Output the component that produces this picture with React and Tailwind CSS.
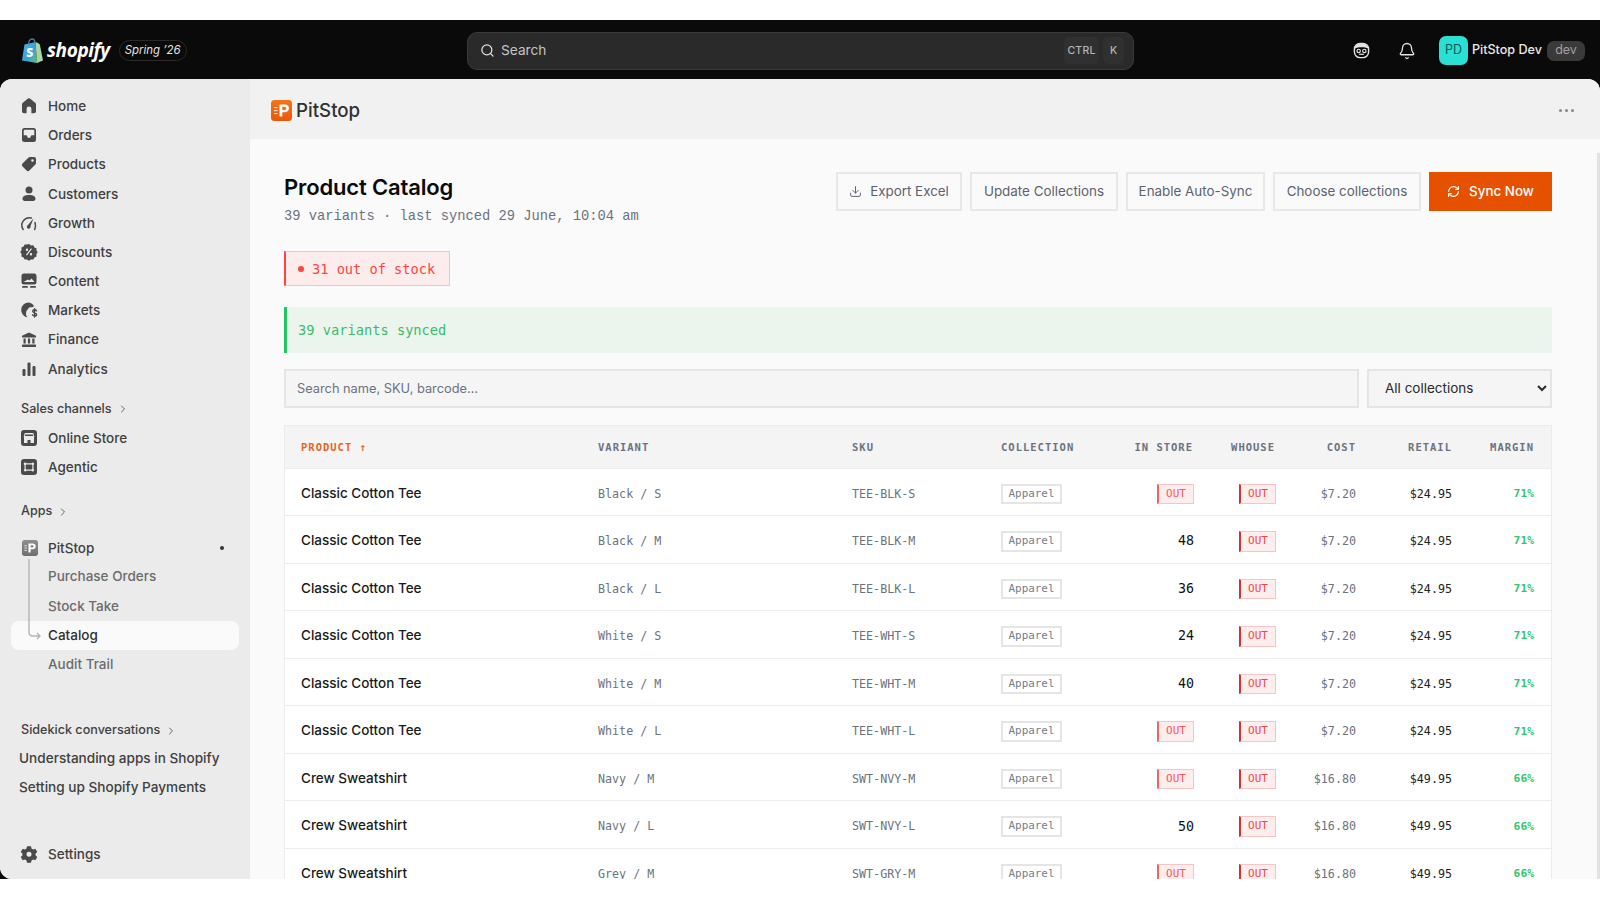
import React from "react";
import { Bell, Search, ChevronRight, Download, RefreshCw } from "lucide-react";

const sans = "font-['Inter','Liberation_Sans',sans-serif]";
const mono = "font-['DejaVu_Sans_Mono',monospace]";
const mono2 = "font-['Liberation_Mono',monospace]";

const I = ({ children }) => (
  <svg width="20" height="20" viewBox="0 0 20 20" fill="#4a4a4a" className="shrink-0">{children}</svg>
);

const icons = {
  Home: <I><path d="M9 2.600a1.600 1.600 0 0 1 2 0l5.200 4.200c.5.400.8 1 .8 1.600v6.800a2 2 0 0 1-2 2h-2.600v-4.400a2.400 2.400 0 0 0-4.800 0v4.400H5a2 2 0 0 1-2-2V8.400c0-.6.3-1.200.8-1.600z"/></I>,
  Orders: <I><path fillRule="evenodd" d="M5.500 3h9A2.500 2.500 0 0 1 17 5.500v9a2.500 2.500 0 0 1-2.500 2.500h-9A2.500 2.500 0 0 1 3 14.500v-9A2.500 2.500 0 0 1 5.500 3M4.700 5.500v4.800h2.500c.5 0 .8.300.9.700a1.900 1.900 0 0 0 3.800 0c.1-.4.400-.7.900-.7h2.500V5.500c0-.4-.3-.8-.8-.8h-9c-.5 0-.8.400-.8.800"/></I>,
  Products: <I><path fillRule="evenodd" d="M11 3h4a2 2 0 0 1 2 2v4c0 .6-.2 1.100-.6 1.500l-6 6a2 2 0 0 1-2.800 0l-4.100-4.100a2 2 0 0 1 0-2.800l6-6C9.900 3.200 10.400 3 11 3m2.500 4.800a1.300 1.300 0 1 0 0-2.600 1.300 1.300 0 0 0 0 2.600"/></I>,
  Customers: <I><circle cx="10" cy="6" r="3.500"/><path d="M3.500 14.800c0-2.300 2.300-3.800 6.500-3.800s6.500 1.500 6.500 3.800c0 1.300-.9 2.200-2.200 2.200H5.700c-1.300 0-2.200-.9-2.200-2.200"/></I>,
  Growth: <I><path fill="none" stroke="#4a4a4a" strokeWidth="1.500" strokeLinecap="round" d="M4.200 16.500A7.500 7.500 0 0 1 12.300 5M16 9.500c.8 2.300.6 4.800-.3 7"/><path d="M14.600 5.200 11.500 13a1.900 1.900 0 1 1-2.500-1z"/></I>,
  Discounts: <I><path fillRule="evenodd" d="M10 2l2 1.400 2.400-.2 1 2.200 2.200 1-.2 2.400L18.800 10l-1.400 2 .2 2.400-2.200 1-1 2.200-2.400-.2-2 1.400-2-1.400-2.400.2-1-2.200-2.200-1 .2-2.400L1.200 10l1.400-2-.2-2.400 2.200-1 1-2.200 2.400.2zM8 9a1.200 1.200 0 1 0 0-2.400A1.200 1.200 0 0 0 8 9m4 4.400A1.200 1.200 0 1 0 12 11a1.200 1.200 0 0 0 0 2.400m.9-6.300-.9-.8-5 6.500.9.800z"/></I>,
  Content: <I><path fillRule="evenodd" d="M5 2.500h10A2.500 2.500 0 0 1 17.500 5v6a2.500 2.500 0 0 1-2.500 2.500H5A2.500 2.500 0 0 1 2.500 11V5A2.500 2.500 0 0 1 5 2.500M4.500 11h11l-3-3.500-2 2-1.500-1z"/><rect x="3" y="15" width="6" height="1.800" rx=".9"/><rect x="11" y="15" width="6" height="1.800" rx=".9"/></I>,
  Markets: <I><path d="M9.500 2.500a7.500 7.500 0 0 0-1 14.900c-.9-1-1.500-2.300-1.500-3.900 0-2 .9-3.700 2.300-4.800.3-1.300 1.600-1.300 2.900-1.400 1.300-.1 2.300-.5 2.800-1.300-1.300-2.200-3.700-3.500-5.500-3.500"/><path fill="none" stroke="#4a4a4a" strokeWidth="1.400" strokeLinecap="round" d="M17.500 10.800c-.4-.7-1.100-1-1.900-1-1.100 0-1.900.6-1.900 1.500 0 2 3.900 1 3.900 3.100 0 .9-.9 1.500-2 1.500-.9 0-1.600-.4-2-1.100M15.600 8.700v8.400"/></I>,
  Finance: <I><path d="M10 2.500l7 3.300v1.700H3V5.800z"/><rect x="4.500" y="8.500" width="2.200" height="5" /><rect x="8.900" y="8.500" width="2.200" height="5" /><rect x="13.300" y="8.500" width="2.200" height="5" /><rect x="3" y="14.500" width="14" height="2.500" rx=".6"/></I>,
  Analytics: <I><rect x="3.500" y="10" width="3" height="7" rx="1"/><rect x="8.500" y="3.500" width="3" height="13.500" rx="1"/><rect x="13.500" y="7" width="3" height="10" rx="1"/></I>,
  "Online Store": <I><path fillRule="evenodd" d="M5 2h10a3 3 0 0 1 3 3v10a3 3 0 0 1-3 3H5a3 3 0 0 1-3-3V5a3 3 0 0 1 3-3m.8 3-1 3.200A1.800 1.800 0 0 0 5 9.600V15h3.500v-3h3v3H15V9.600a1.800 1.800 0 0 0 .2-1.400L14.200 5zm.4 1.500h7.600l.4 1.500H5.800z"/></I>,
  Agentic: <I><path fillRule="evenodd" d="M5 2h10a3 3 0 0 1 3 3v10a3 3 0 0 1-3 3H5a3 3 0 0 1-3-3V5a3 3 0 0 1 3-3m1 3.500A1.300 1.300 0 0 0 5.500 8v4a1.300 1.300 0 1 0 1.800 1.800h5.400A1.300 1.300 0 1 0 14.500 12V8a1.300 1.300 0 1 0-1.800-1.800H7.300A1.300 1.300 0 0 0 6 5.500m1.300 2h5.400l.6.600v3.800l-.6.600H7.300l-.6-.6V8.100z"/></I>,
  Settings: <I><path fillRule="evenodd" d="M8 2.500h4l.5 2.200 1.600.9 2.200-.7 2 3.400-1.700 1.500v1.800l1.700 1.500-2 3.400-2.200-.7-1.600.9-.5 2.200H8l-.5-2.200-1.600-.9-2.200.7-2-3.400 1.700-1.500V9.800L1.700 8.300l2-3.400 2.200.7 1.600-.9zM10 13a2.500 2.500 0 1 0 0-5 2.500 2.500 0 0 0 0 5" transform="translate(0 -.2)"/></I>,
};

const NavItem = ({ label }) => (
  <div className="flex h-[29.2px] items-center gap-[9px] pl-[19px] text-[13.500px] font-medium text-[#404040]">
    {icons[label]}
    <span>{label}</span>
  </div>
);

const SectionLabel = ({ children, className = "" }) => (
  <div className={`flex h-[29.2px] items-center gap-[5px] pl-[21px] text-[12.600px] font-medium text-[#404040] ${className}`}>
    <span>{children}</span>
    <ChevronRight size={12} strokeWidth={1.800} color="#555" />
  </div>
);

const PitLogo = ({ size, gray }) => (
  <svg width={size} height={size} viewBox="0 0 21 21" className="shrink-0">
    <defs>
      <linearGradient id={gray ? "pg" : "po"} x1="0" y1="0" x2="0" y2="1">
        <stop offset="0" stopColor={gray ? "#8f8f8f" : "#f97316"} />
        <stop offset="1" stopColor={gray ? "#6e6e6e" : "#ea580c"} />
      </linearGradient>
    </defs>
    <rect width="21" height="21" rx="3.500" fill={`url(#${gray ? "pg" : "po"})`} />
    <path fill="#fff" fillRule="evenodd" d="M8.500 4.500h5.300c2.700 0 4.200 1.400 4.200 3.800s-1.500 3.900-4.200 3.900h-2.500v4.300H8.500zm2.800 2.300v3.100h2.100c1.200 0 1.800-.6 1.800-1.600s-.6-1.500-1.800-1.500z" />
    <rect x="3" y="7" width="3.500" height="1.100" fill="#fff" opacity=".85" />
    <rect x="3" y="10" width="3.500" height="1.100" fill="#fff" opacity=".85" />
    <rect x="3" y="13" width="3.500" height="1.100" fill="#fff" opacity=".85" />
  </svg>
);

const ShopifyBag = () => (
  <svg width="21" height="25" viewBox="0 0 21 25" className="shrink-0">
    <defs>
      <linearGradient id="bagg" x1="0" y1="0" x2="1" y2="1">
        <stop offset="0" stopColor="#4fb4e8" />
        <stop offset=".55" stopColor="#3aa0d8" />
        <stop offset="1" stopColor="#5fc27e" />
      </linearGradient>
    </defs>
    <path fill="url(#bagg)" d="M2.500 6.500 13.500 4l1.500 21L0 22.500z" />
    <path fill="#a9d6a0" d="M13.500 4l2.500 1 1.800 1.500L21 22.500 15 25z" />
    <path fill="none" stroke="#4a7d9c" strokeWidth="1.300" d="M6.500 6.500c0-3 1.500-5.500 3.500-5.500s3 2 3 4.500" />
    <text x="7.600" y="18.500" fontSize="12" fontWeight="800" fill="#fff" textAnchor="middle" fontFamily="Open Sans, sans-serif">S</text>
  </svg>
);

const Btn = ({ children, w }) => (
  <button className={`flex h-[39px] items-center justify-center gap-2 border-2 border-[#e8e8e8] bg-[#fafafa] text-[13.400px] text-[#5c6270] ${w}`}>
    {children}
  </button>
);

const grid = "grid grid-cols-[296px_254px_149px_121px_105px_82px_81px_96px_83px] items-center";

const OutBadge = ({ light }) => (
  <span className={`inline-flex h-[20.500px] w-[37px] items-center justify-center border border-l-2 border-[#fbc4c4] bg-[#fdeeee] ${mono} text-[11px] ${light ? "border-l-[#f86060] text-[#f55]" : "border-l-[#dc3030] text-[#f04848]"}`}>
    OUT
  </span>
);

const tee = (c, s, store) => ({ p: "Classic Cotton Tee", v: `${c} / ${s}`, sku: `TEE-${c === "Black" ? "BLK" : "WHT"}-${s}`, store, cost: "$7.20", retail: "$24.95", m: "71%" });
const crew = (c, s, store) => ({ p: "Crew Sweatshirt", v: `${c} / ${s}`, sku: `SWT-${c === "Navy" ? "NVY" : "GRY"}-${s}`, store, cost: "$16.80", retail: "$49.95", m: "66%" });

const rows = [
  tee("Black", "S", null), tee("Black", "M", 48), tee("Black", "L", 36),
  tee("White", "S", 24), tee("White", "M", 40), tee("White", "L", null),
  crew("Navy", "M", null), crew("Navy", "L", 50), crew("Grey", "M", null),
];

const Th = ({ children, right, pr = "pr-[17px]" }) => (
  <div className={`pl-[17px] ${pr} ${mono} text-[10.500px] font-bold tracking-[1px] text-[#6b7280] ${right ? "text-right" : ""}`}>{children}</div>
);

export default function App() {
  return (
    <div className={`flex h-screen flex-col overflow-hidden bg-white ${sans}`}>
      <div className="h-5 shrink-0" />
      <div className="flex h-[859px] shrink-0 flex-col bg-[#0a0a0a]">
        <header className="relative flex h-[59px] shrink-0 items-center pt-[2px]">
          <div className="flex w-[467px] shrink-0 items-center pl-[22px]">
            <ShopifyBag />
            <span className="ml-[4px] font-['Open_Sans',sans-serif] text-[19px] font-bold italic leading-none tracking-[-0.4px] text-white">shopify</span>
            <span className="ml-[9px] flex h-[21px] w-[68px] items-center justify-center rounded-full border border-[#2a2a2a] text-[11.400px] italic text-[#e3e3e3]">Spring ’26</span>
          </div>
          <div className="flex h-[38px] w-[667px] items-center rounded-[10px] border border-[#3a3a3a] bg-[#2a2a2a] pl-[12px] pr-[9px]">
            <Search size={15} strokeWidth={2} color="#e3e3e3" />
            <span className="ml-[6px] text-[13.700px] text-[#c4c4c4]">Search</span>
            <span className="ml-auto flex h-[27px] w-[35px] items-center justify-center rounded-[5px] bg-[#303030] text-[10.500px] font-medium tracking-[0.2px] text-[#b5b5b5]">CTRL</span>
            <span className="ml-1 flex h-[27px] w-[21px] items-center justify-center rounded-[5px] bg-[#303030] text-[10.500px] font-medium text-[#b5b5b5]">K</span>
          </div>
          <div className="ml-auto flex items-center pr-[15px]">
            <svg width="17" height="17" viewBox="0 0 18 18" className="mr-[28px]">
              <rect x="1.500" y="1.500" width="15" height="15" rx="6" fill="none" stroke="#e3e3e3" strokeWidth="1.500" />
              <path d="M2 7c2-1 4-1.500 7-1.500S14 6 16 7v-2l-3-3H5L2 5z" fill="#e3e3e3" />
              <circle cx="6" cy="9.500" r="1.800" fill="none" stroke="#e3e3e3" strokeWidth="1.200" />
              <circle cx="12" cy="9.500" r="1.800" fill="none" stroke="#e3e3e3" strokeWidth="1.200" />
              <path d="M6.500 13h5" stroke="#e3e3e3" strokeWidth="1.300" />
            </svg>
            <Bell size={18} strokeWidth={1.700} color="#e3e3e3" className="mr-[23px]" />
            <span className="flex h-[29px] w-[29px] items-center justify-center rounded-[7px] bg-[#2ae0d4] text-[12.500px] text-[#0c5a58]">PD</span>
            <span className="ml-[4px] text-[12.600px] font-medium text-[#e8e8e8]">PitStop Dev</span>
            <span className="ml-[5px] flex h-5 w-[38px] items-center justify-center rounded-[7px] bg-[#3a3a3a] text-[12.500px] text-[#a0a0a0]">dev</span>
          </div>
        </header>

        <div className="relative flex min-h-0 flex-1 overflow-hidden rounded-[12px] rounded-br-none bg-[#fafafa]">
          <aside className="flex w-[250px] shrink-0 flex-col bg-[#ebebeb] pb-[10px] pt-[12.500px]">
            {["Home", "Orders", "Products", "Customers", "Growth", "Discounts", "Content", "Markets", "Finance", "Analytics"].map((l) => (
              <NavItem key={l} label={l} />
            ))}
            <SectionLabel className="mt-[11px]">Sales channels</SectionLabel>
            <NavItem label="Online Store" />
            <NavItem label="Agentic" />
            <SectionLabel className="mt-[15px]">Apps</SectionLabel>
            <div className="relative mt-[7px] text-[13.500px] font-medium">
              <div className="flex h-[29.2px] items-center gap-[10.500px] pl-[21.500px] text-[#404040]">
                <PitLogo size={16} gray />
                <span>PitStop</span>
                <span className="ml-auto mr-[26px] h-1 w-1 rounded-full bg-[#333]" />
              </div>
              <div className="h-[29.2px] pl-[48px] leading-[29.2px] text-[#6b6b6b]">Purchase Orders</div>
              <div className="h-[29.2px] pl-[48px] leading-[29.2px] text-[#6b6b6b]">Stock Take</div>
              <div className="mx-[11px] h-[29.2px] rounded-lg bg-[#fafafa] pl-[37px] leading-[29.2px] text-[#303030]">Catalog</div>
              <div className="h-[29.2px] pl-[48px] leading-[29.2px] text-[#6b6b6b]">Audit Trail</div>
              <svg className="absolute left-[27px] top-[26px]" width="16" height="84" viewBox="0 0 16 84" fill="none" stroke="#b4b4b4" strokeWidth="1.400">
                <path d="M2 0v73q0 4 4 4h7M10 74l3 3-3 3" />
              </svg>
            </div>
            <SectionLabel className="mt-[36px] pt-[2px]">Sidekick conversations</SectionLabel>
            <div className="h-[29.2px] pl-[19px] text-[13.600px] font-medium leading-[29.2px] text-[#404040]">Understanding apps in Shopify</div>
            <div className="h-[29.2px] pl-[19px] text-[13.600px] font-medium leading-[29.2px] text-[#404040]">Setting up Shopify Payments</div>
            <div className="mt-auto"><NavItem label="Settings" /></div>
          </aside>

          <main className="min-w-0 flex-1 overflow-hidden">
            <div className="flex h-[59.500px] items-center bg-[#f1f1f1] pl-[21px] pr-[26px] pt-[3px]">
              <PitLogo size={21} />
              <span className="ml-[4px] pt-[2px] text-[18.700px] font-medium text-[#303030]">PitStop</span>
              <span className="ml-auto flex gap-[3px]">
                <i className="h-[3px] w-[3px] rounded-full bg-[#888]" />
                <i className="h-[3px] w-[3px] rounded-full bg-[#888]" />
                <i className="h-[3px] w-[3px] rounded-full bg-[#888]" />
              </span>
            </div>

            <div className="pl-[34px] pr-[48px] pt-[33px]">
              <div className="flex items-start justify-between">
                <div>
                  <h1 className="text-[22px] font-semibold leading-[30px] tracking-[-0.15px] text-[#0a0a0a]">Product Catalog</h1>
                  <p className={`mt-[5px] ${mono2} text-[13.750px] leading-[20px] text-[#6b7280]`}>39 variants · last synced 29 June, 10:04 am</p>
                </div>
                <div className="flex gap-2">
                  <Btn w="w-[126px]"><Download size={13} strokeWidth={1.800} />Export Excel</Btn>
                  <Btn w="w-[148px]">Update Collections</Btn>
                  <Btn w="w-[139px]">Enable Auto-Sync</Btn>
                  <Btn w="w-[148px]">Choose collections</Btn>
                  <button className="flex h-[39px] w-[123px] items-center justify-center gap-[9px] bg-[#e65100] text-[13.400px] font-medium text-white">
                    <RefreshCw size={13} strokeWidth={2.200} />Sync Now
                  </button>
                </div>
              </div>

              <div className={`mt-[24px] flex h-[35px] w-[166px] items-center border border-l-2 border-[#fbc0c0] border-l-[#f44] bg-[#fdecec] pl-[12px] pt-[2px] ${mono} text-[13.650px] text-[#f44]`}>
                <span className="mr-[8px] h-[6px] w-[6px] rounded-full bg-[#f44]" />31 out of stock
              </div>

              <div className={`mt-[21px] flex h-[46px] items-center border-l-[3px] border-[#22c55e] bg-[#ebf5ee] pl-[11px] pt-[2px] ${mono} text-[13.700px] text-[#3dbb6b]`}>
                39 variants synced
              </div>

              <div className="mt-4 flex gap-2">
                <div className="flex h-[39px] flex-1 items-center border-2 border-[#e5e5e5] bg-[#f5f5f5] pl-[11px] pt-[2px] text-[12.800px] text-[#6b7280]">Search name, SKU, barcode…</div>
                <select className="h-[39px] w-[185px] border-2 border-[#e5e5e5] bg-[#f5f5f5] pl-[12px] text-[13.500px] text-[#2a2a2a]" defaultValue="all">
                  <option value="all">All collections</option>
                </select>
              </div>

              <div className="mt-[17px] border-x border-[#ececec]">
                <div className={`${grid} h-[44px] border-y border-y-[#ececec] bg-[#f4f4f4] pt-[3px]`}>
                  <div className={`px-[16px] ${mono} text-[10.500px] font-bold tracking-[1px] text-[#e8651f]`}>PRODUCT ↑</div>
                  <Th>VARIANT</Th>
                  <Th>SKU</Th>
                  <Th>COLLECTION</Th>
                  <Th right>IN STORE</Th>
                  <Th right>WHOUSE</Th>
                  <Th right>COST</Th>
                  <Th right>RETAIL</Th>
                  <Th right pr="pr-[18px]">MARGIN</Th>
                </div>
                {rows.map((r) => (
                  <div key={r.sku} className={`${grid} h-[47.550px] border-b border-[#ececec] bg-white pt-[2px]`}>
                    <div className="px-[16px] text-[13.500px] font-medium text-[#1a1a1a]">{r.p}</div>
                    <div className={`px-[17px] pt-[3px] ${mono} text-[11.700px] text-[#6b7280]`}>{r.v}</div>
                    <div className={`px-[17px] pt-[3px] ${mono} text-[11.700px] text-[#6b7280]`}>{r.sku}</div>
                    <div className="flex px-[17px] pt-[2px]">
                      <span className={`inline-flex h-[20.500px] w-[61px] items-center justify-center border-2 border-[#e5e5e5] ${mono} text-[10.900px] text-[#777d88]`}>Apparel</span>
                    </div>
                    <div className={`flex justify-end pr-[16px] pt-[2px] ${mono} text-[13.300px] text-[#111]`}>
                      {r.store === null ? <OutBadge light /> : r.store}
                    </div>
                    <div className="flex justify-end pr-[16px] pt-[2px]"><OutBadge /></div>
                    <div className={`px-[17px] pt-[3px] text-right ${mono} text-[11.700px] text-[#6b7280]`}>{r.cost}</div>
                    <div className={`px-[17px] pt-[3px] text-right ${mono} text-[11.700px] text-[#222]`}>{r.retail}</div>
                    <div className={`pl-[17px] pr-[18px] pt-[3px] text-right ${mono} text-[11.300px] font-semibold text-[#34c76a]`}>{r.m}</div>
                  </div>
                ))}
              </div>
            </div>
          </main>
          <div className="absolute right-0 top-[74px] bottom-0 w-[3px] bg-[#e2e2e2]" />
        </div>
      </div>
    </div>
  );
}
